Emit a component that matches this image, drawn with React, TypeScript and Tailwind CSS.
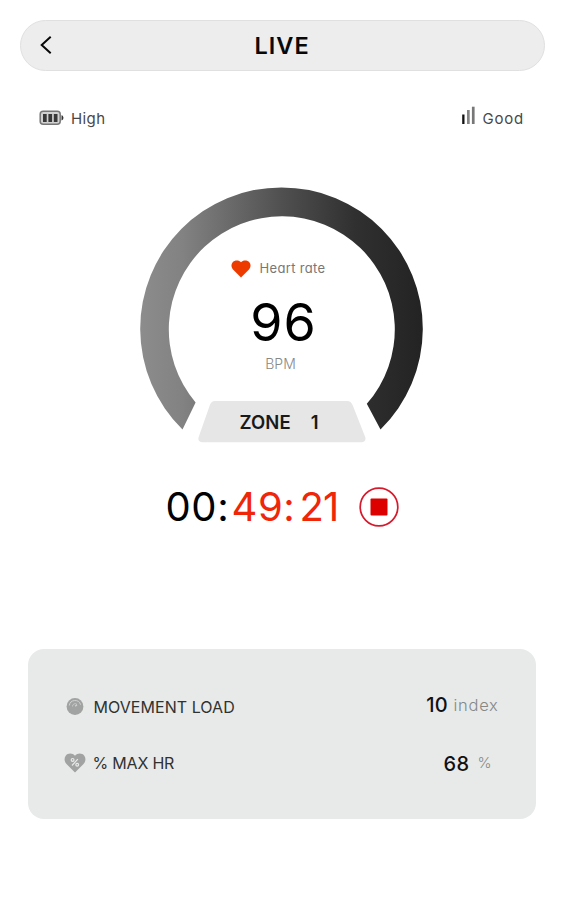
import React from "react";

function Header() {
  return (
    <header className="ml-px flex h-[51px] w-[525px] shrink-0 items-center rounded-full border border-[#e0e0e0] bg-[#ededed]">
      <button className="ml-[17px] flex w-4 justify-center" aria-label="Back">
        <svg className="mb-0.5" width="14" height="20" viewBox="0 0 14 20" fill="none" stroke="#080808" strokeWidth="2">
          <path d="M11.700 1.800 2.700 10l9 8.200" />
        </svg>
      </button>
      <h1 className="ml-[201px] text-[23.500px] leading-6 font-semibold tracking-[1px] text-[#080808]">LIVE</h1>
    </header>
  );
}

function Battery() {
  return (
    <svg width="25" height="16" viewBox="0 0 25 16">
      <rect x="1.200" y="1.200" width="20" height="13" rx="3" fill="#d2d2d2" stroke="#777" strokeWidth="1.500" />
      <path d="M22.500 5.200v5.200c1.300-.3 1.900-1.200 1.900-2.600s-.6-2.300-1.900-2.600Z" fill="#333" />
      <path d="M4 4h3.700v8H4zM9.400 4h3.700v8H9.400zM14.800 4h3.700v8h-3.700z" fill="#393939" />
    </svg>
  );
}

function Status() {
  return (
    <div className="mt-[36px] flex h-[22px] w-[485px] items-center justify-between text-[15px] leading-[22px] text-[#484848]">
      <div className="flex items-center">
        <Battery />
        <span className="ml-[7px] pt-px tracking-[0.4px]">High</span>
      </div>
      <div className="flex items-center">
        <svg className="mb-[6px]" width="14" height="18" viewBox="0 0 14 18">
          <path d="M.2 8.500h2.300V18H.2z" fill="#111" />
          <path d="M5 4h2.700v14H5z" fill="#858585" />
          <path d="M9.900.7h2.700V18H9.900z" fill="#777" />
        </svg>
        <span className="ml-[6px] pt-px tracking-[0.8px]">Good</span>
      </div>
    </div>
  );
}

function Gauge() {
  return (
    <section className="relative mt-[58px] h-[257px] w-[284px]">
      <svg className="absolute inset-0" width="284" height="257" viewBox="0 0 284 257">
        <defs>
          <linearGradient id="ring" x1="0" y1="0" x2="1" y2="0">
            <stop offset="0" stopColor="#8c8c8c" />
            <stop offset=".15" stopColor="#828282" />
            <stop offset=".5" stopColor="#505050" />
            <stop offset=".76" stopColor="#303030" />
            <stop offset="1" stopColor="#232323" />
          </linearGradient>
        </defs>
        <path
          d="M42.500 242.500A141.300 141.300 0 1 1 240.500 242.500L226.800 216.800A113 113 0 1 0 55.600 215.400Z"
          fill="url(#ring)"
        />
        <path
          d="M75 214h132c3 0 4.500 1.500 5.700 4.200l12.400 31.500c1.200 3-.4 5.500-3.600 5.500H62.500c-3 0-5-2.200-3.800-5.200L70 217.800c1-2.500 2.300-3.800 5-3.800Z"
          fill="#e6e6e6"
        />
      </svg>
      <div className="relative flex h-full flex-col items-center">
        <div className="mt-[71px] mr-[6px] flex h-5 items-center">
          <svg className="mt-0.5" width="20" height="18" viewBox="0 0 20 18">
            <path
              d="M10 17.500 2 9.500C.2 7.600-.1 4.500 1.500 2.500 3.600-.1 7.900-.1 10 2.200c2.100-2.300 6.400-2.300 8.500.3 1.600 2 1.300 5.100-.5 7Z"
              fill="#ed3b00"
            />
          </svg>
          <span className="ml-[8px] text-[13px] leading-5 tracking-[0.350px] text-[#777]">Heart rate</span>
        </div>
        <div className="mt-[19px] ml-[4px] h-[52px] text-[52px] leading-[52px] tracking-[1px] text-black">96</div>
        <div className="mt-[5px] mr-[2px] h-5 text-[14px] leading-5 font-light text-[#888]">BPM</div>
        <div className="mt-[28px] mr-[5px] flex h-[40px] gap-[20px] text-[18.500px] leading-[40px] font-semibold tracking-[0.100px] text-[#191919]">
          <span>ZONE</span>
          <span>1</span>
        </div>
      </div>
    </section>
  );
}

function Timer() {
  return (
    <section className="mt-[42px] ml-[2px] flex h-[42px] w-[234px] items-center">
      <div className="flex w-[192px] text-[40px] leading-[42px] tracking-[0.600px] text-black">
        <span className="w-[66px]">00:</span>
        <span className="w-[68px] text-[#ef2608]">49:</span>
        <span className="tracking-[-1px] text-[#ef2608]">21</span>
      </div>
      <button aria-label="Stop">
        <svg width="42" height="42" viewBox="0 0 42 42">
          <circle cx="21" cy="21" r="18.800" fill="none" stroke="#d7192c" strokeWidth="1.700" />
          <rect x="12.500" y="12.500" width="17" height="17" rx="1" fill="#dc0000" />
        </svg>
      </button>
    </section>
  );
}

function LoadIcon() {
  return (
    <svg width="22" height="20" viewBox="0 0 22 20" fill="none">
      <circle cx="11" cy="10.500" r="8.400" fill="#a0a3a2" />
      <path d="M5.300 9.500a5.800 5.800 0 0 1 11.300-.8" stroke="#d0d3d2" strokeWidth="1" />
      <path d="M8.500 10.500a2.600 2.600 0 0 1 4.500-2" stroke="#c6c9c8" strokeWidth=".9" />
      <path d="m11.200 10.300 1.800-1.600" stroke="#d0d3d2" strokeWidth="1.200" />
    </svg>
  );
}

function MaxIcon() {
  return (
    <svg width="22" height="20" viewBox="0 0 22 20">
      <path
        d="M11 19.500 2.500 11C.2 8.600-.1 5 1.900 2.500 4-.1 8.600-.2 11 2.800c2.400-3 7-2.900 9.100-.3 2 2.500 1.700 6.100-.6 8.500Z"
        fill="#a0a3a2"
      />
      <g fill="none" stroke="#e7eae9" strokeWidth="1.200">
        <circle cx="8.600" cy="6.900" r="1.400" />
        <circle cx="13.200" cy="11.800" r="1.400" />
        <path d="m13.800 6.200-5.800 6.300" />
      </g>
    </svg>
  );
}

function Metrics() {
  return (
    <section className="mt-[121px] flex h-[170px] w-[508px] flex-col rounded-[16px] bg-[#e8eae9] pt-[42px] pr-[37px] pl-[36px]">
      <div className="flex h-[30px] items-center">
        <LoadIcon />
        <span className="ml-[8px] pt-px text-[16px] tracking-[0.050px] text-[#303231]">MOVEMENT LOAD</span>
        <span className="ml-auto pb-0.5 text-[20px] font-medium text-[#111]">10</span>
        <span className="ml-[6px] pb-0.5 text-[16.500px] font-light tracking-[0.700px] text-[#858887]">index</span>
      </div>
      <div className="mt-[27px] flex h-[30px] items-center">
        <MaxIcon />
        <span className="ml-[7px] text-[16px] tracking-[-0.200px] text-[#303231]">% MAX HR</span>
        <span className="ml-auto pt-px text-[20px] font-medium tracking-[0.400px] text-[#111]">68</span>
        <span className="mr-[7px] ml-[8px] pt-px text-[15px] font-light text-[#858887]">%</span>
      </div>
    </section>
  );
}

export default function App() {
  return (
    <main className="flex h-[900px] w-[563px] flex-col items-center overflow-hidden bg-white pt-5 font-['Inter','Noto_Sans',sans-serif] [font-feature-settings:'cv11']">
      <Header />
      <Status />
      <Gauge />
      <Timer />
      <Metrics />
    </main>
  );
}
